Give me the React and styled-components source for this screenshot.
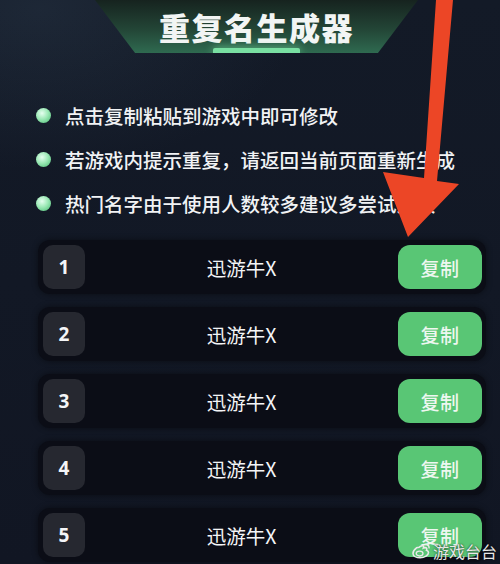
import React from "react";
import styled, { createGlobalStyle } from "styled-components";

const GlobalStyle = createGlobalStyle`
  html, body {
    margin: 0;
    padding: 0;
    background: #121826;
  }
  body {
    font-family: "Noto Sans CJK SC", "Noto Sans", sans-serif;
  }
`;

const SPage = styled.div`
  position: relative;
  width: 500px;
  height: 564px;
  overflow: hidden;
  display: flex;
  flex-direction: column;
  background:
    radial-gradient(ellipse 260px 160px at 40px 10px, rgba(60, 80, 100, 0.25), transparent),
    linear-gradient(180deg, #131a27 0%, #111623 100%);
`;

const SBanner = styled.div`
  align-self: center;
  margin-left: 13px;
  width: 323px;
  height: 53px;
  display: flex;
  flex-direction: column;
  align-items: center;
  justify-content: space-between;
  clip-path: polygon(0 0, 100% 0, 87.6% 100%, 12.4% 100%);
  background: linear-gradient(180deg, #16231f 0%, #234536 55%, #2f6a50 100%);
`;

const STitle = styled.h1`
  margin: 8px 0 0 0;
  font-size: 31px;
  line-height: 38px;
  font-weight: 900;
  letter-spacing: 1.5px;
  color: #f2f5f4;
`;

const SBannerBar = styled.div`
  width: 87px;
  height: 5px;
  border-radius: 2px 2px 0 0;
  background: #79dfa2;
  box-shadow: 0 0 8px rgba(120, 230, 160, 0.8);
`;

const STips = styled.ul`
  list-style: none;
  margin: 49px 0 0 0;
  padding: 0 0 0 36px;
  display: flex;
  flex-direction: column;
  gap: 18px;
`;

const STip = styled.li`
  display: flex;
  align-items: center;
  gap: 14px;
  height: 26px;
  font-size: 19.5px;
  font-weight: 500;
  color: #f1f3f5;
  white-space: nowrap;
`;

const SDot = styled.span`
  width: 15px;
  height: 15px;
  border-radius: 50%;
  flex-shrink: 0;
  background: radial-gradient(circle at 40% 35%, #e6fff0 0%, #9ce9b6 45%, #45b86e 100%);
`;

const SRows = styled.div`
  margin: 24px 0 0 38px;
  width: 448px;
  display: flex;
  flex-direction: column;
  gap: 13px;
`;

const SRow = styled.div`
  display: flex;
  align-items: center;
  height: 54px;
  padding: 0 4px 0 5px;
  box-sizing: border-box;
  border-radius: 12px;
  background: #0b0d16;
  box-shadow: 0 0 6px rgba(0, 0, 0, 0.45);
`;

const SIndex = styled.div`
  width: 42px;
  height: 44px;
  border-radius: 10px;
  background: #262830;
  display: flex;
  align-items: center;
  justify-content: center;
  font-family: "Noto Sans", sans-serif;
  font-size: 19px;
  font-weight: 700;
  color: #f4f5f7;
`;

const SName = styled.div`
  flex: 1;
  text-align: center;
  font-size: 19.5px;
  font-weight: 400;
  color: #f4f5f7;
`;

const SCopy = styled.button`
  width: 84px;
  height: 44px;
  border: none;
  border-radius: 12px;
  background: #59c675;
  color: #eef7f0;
  font-family: "Noto Sans CJK SC", sans-serif;
  font-size: 19px;
  font-weight: 500;
  letter-spacing: 0.5px;
  padding: 0;
  cursor: pointer;
`;

const SArrow = styled.svg`
  position: absolute;
  left: 0;
  top: 0;
  pointer-events: none;
`;

const SWatermark = styled.div`
  position: absolute;
  right: 3px;
  bottom: 4px;
  display: flex;
  align-items: center;
  gap: 2px;
  font-size: 16px;
  line-height: 18px;
  color: #e9e9e9;
  text-shadow: 0 0 2px rgba(0, 0, 0, 0.9);
`;

const tips = [
  "点击复制粘贴到游戏中即可修改",
  "若游戏内提示重复，请返回当前页面重新生成",
  "热门名字由于使用人数较多建议多尝试几次",
];

const names = [1, 2, 3, 4, 5];

function WeiboLogo() {
  return (
    <svg width="20" height="16" viewBox="0 0 20 16">
      <path
        d="M8.2 4.2c2-1.6 4-1.8 4.4-0.8 0.2 0.6 0 1.2-0.2 1.7 1-0.4 2.6-0.7 3.2 0.1 0.4 0.6 0.2 1.4-0.1 2 1.3 0.4 2 1.3 2 2.4 0 2.6-3.8 5.2-8.4 5.2C5.3 14.8 2 13.1 2 10.4c0-1.8 1.4-4 3.5-5.6z"
        fill="none"
        stroke="#eaeaea"
        strokeWidth="1.6"
      />
      <ellipse cx="8.6" cy="10.6" rx="3.4" ry="2.4" fill="none" stroke="#eaeaea" strokeWidth="1.3" />
      <path d="M14.5 1.5c2 0 3.6 1.4 3.6 3.4" fill="none" stroke="#eaeaea" strokeWidth="1.4" strokeLinecap="round" />
    </svg>
  );
}

export default function App() {
  return (
    <>
      <GlobalStyle />
      <SPage>
        <SBanner>
          <STitle>重复名生成器</STitle>
          <SBannerBar />
        </SBanner>
        <STips>
          {tips.map((t) => (
            <STip key={t}>
              <SDot />
              {t}
            </STip>
          ))}
        </STips>
        <SRows>
          {names.map((n) => (
            <SRow key={n}>
              <SIndex>{n}</SIndex>
              <SName>迅游牛X</SName>
              <SCopy>复制</SCopy>
            </SRow>
          ))}
        </SRows>
        <SArrow width="500" height="564" viewBox="0 0 500 564">
          <polygon
            points="436,0 453,0 437,181 459,184 408,237 383,172 424,178"
            fill="#ec4626"
          />
        </SArrow>
        <SWatermark>
          <WeiboLogo />
          游戏台台
        </SWatermark>
      </SPage>
    </>
  );
}
